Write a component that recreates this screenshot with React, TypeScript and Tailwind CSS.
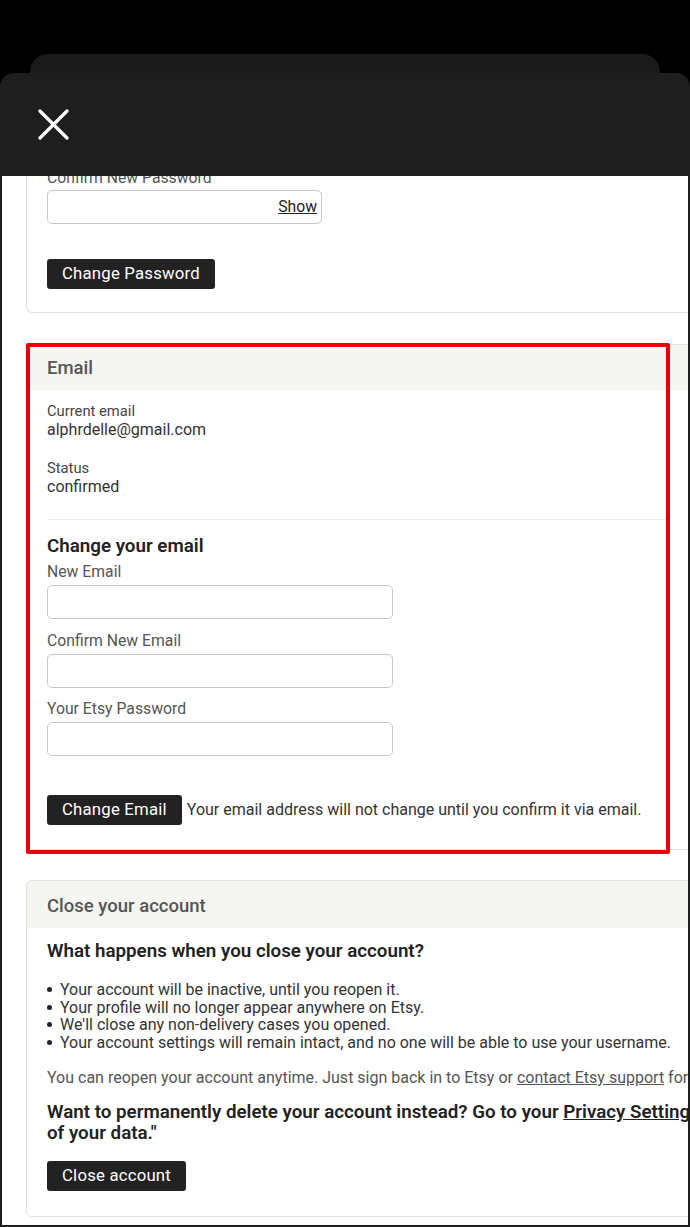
import React from "react";

const font = { fontFamily: "Roboto, 'Liberation Sans', sans-serif" };

function Input({ w = "w-[346px]", show = false }: { w?: string; show?: boolean }) {
  return (
    <div className={`${w} h-[34px] rounded-[5px] border border-[#c8c8c8] bg-white flex items-center justify-end pr-[4px]`}>
      {show && <span className="text-[15.75px] text-[#222] underline">Show</span>}
    </div>
  );
}

function Btn({ children }: { children: React.ReactNode }) {
  return (
    <div className="inline-flex h-[30px] items-center rounded-[3px] bg-[#222222] px-[15px] text-[16.75px] text-white tracking-[0.2px] shrink-0">
      {children}
    </div>
  );
}

export default function App() {
  return (
    <div className="w-[690px] h-[1227px] bg-black overflow-hidden flex flex-col text-[#222]" style={font}>
      <div className="h-[54px] shrink-0" />
      <div className="mx-[30px] h-[19px] shrink-0 rounded-t-[18px] bg-[#1a1a1a]" />
      <div className="flex-1 flex flex-col rounded-t-[14px] bg-[#1e1e1e] px-[2px] pb-[2px] min-h-0">
        <div className="h-[103px] shrink-0 flex items-center pl-[36px]">
          <svg width="31" height="31" viewBox="0 0 31 31">
            <path d="M2 2 L29 29 M29 2 L2 29" stroke="white" strokeWidth="3.2" strokeLinecap="round" />
          </svg>
        </div>
        <div className="flex-1 bg-white overflow-hidden min-h-0">
          <div className="-mt-[7px] ml-[24px] w-[700px]">
            {/* Password card (scrolled) */}
            <div className="rounded-b-[6px] border border-t-0 border-[#e1e1e1] px-[20px] pb-[23px]">
              <div className="h-[21px] text-[15.75px] leading-[17px] text-[#555]">Confirm New Password</div>
              <div>
                <Input w="w-[275px]" show />
              </div>
              <div className="mt-[35px]">
                <Btn>Change Password</Btn>
              </div>
            </div>

            {/* Email card */}
            <div className="relative mt-[31px] rounded-[6px] border border-[#e1e1e1]">
              <div className="h-[45px] bg-[#f5f5f1] rounded-t-[6px] flex items-center px-[20px] pt-[3px] text-[18.5px] font-medium text-[#555]">
                Email
              </div>
              <div className="px-[20px] pt-[12px] pb-[24px]">
                <div className="text-[14.75px] leading-[18px] text-[#444]">Current email</div>
                <div className="text-[16px] leading-[20px] text-[#333]">alphrdelle@gmail.com</div>
                <div className="mt-[19px] text-[14.75px] leading-[18px] text-[#444]">Status</div>
                <div className="text-[16px] leading-[20px] text-[#333]">confirmed</div>
                <div className="mt-[22px] w-[620px] border-t border-[#ececec]" />
                <div className="mt-[15px] text-[18.75px] leading-[22px] font-semibold text-[#222]">Change your email</div>
                <div className="mt-[5px] text-[15.75px] leading-[20px] text-[#555]">New Email</div>
                <div className="mt-[3px]"><Input /></div>
                <div className="mt-[12px] text-[15.75px] leading-[20px] text-[#555]">Confirm New Email</div>
                <div className="mt-[3px]"><Input /></div>
                <div className="mt-[11px] text-[15.75px] leading-[20px] text-[#555]">Your Etsy Password</div>
                <div className="mt-[3px]"><Input /></div>
                <div className="mt-[39px] flex items-center gap-[5px]">
                  <Btn>Change Email</Btn>
                  <span className="text-[16px] text-[#333] whitespace-nowrap">Your email address will not change until you confirm it via email.</span>
                </div>
              </div>
              <div className="absolute left-[-1px] top-[-2px] w-[644px] h-[511px] border-[4px] border-[#e8000b] rounded-[2px] pointer-events-none" />
            </div>

            {/* Close account card */}
            <div className="mt-[30px] rounded-[6px] border border-[#e1e1e1]">
              <div className="h-[47px] bg-[#f5f5f1] rounded-t-[6px] flex items-center px-[20px] pt-[4px] text-[18.5px] font-medium text-[#555]">
                Close your account
              </div>
              <div className="px-[20px] pt-[12px] pb-[25px]">
                <div className="text-[18.75px] leading-[22px] font-semibold text-[#222]">What happens when you close your account?</div>
                <ul className="mt-[19px] text-[16px] leading-[17.5px] text-[#333]">
                  {[
                    "Your account will be inactive, until you reopen it.",
                    "Your profile will no longer appear anywhere on Etsy.",
                    "We'll close any non-delivery cases you opened.",
                    "Your account settings will remain intact, and no one will be able to use your username.",
                  ].map((t) => (
                    <li key={t} className="flex items-center gap-[8px] whitespace-nowrap">
                      <span className="w-[5px] h-[5px] rounded-full bg-[#222] shrink-0" />
                      <span>{t}</span>
                    </li>
                  ))}
                </ul>
                <div className="mt-[17px] text-[16px] leading-[20px] text-[#555] whitespace-nowrap">
                  You can reopen your account anytime. Just sign back in to Etsy or{" "}
                  <span className="underline">contact Etsy support</span> for help.
                </div>
                <div className="mt-[14px] text-[18.75px] leading-[21px] font-semibold text-[#222] whitespace-nowrap">
                  Want to permanently delete your account instead? Go to your{" "}
                  <span className="underline">Privacy Settings</span> to request deletion
                  <br />
                  of your data."
                </div>
                <div className="mt-[17px]">
                  <Btn>Close account</Btn>
                </div>
              </div>
            </div>
          </div>
        </div>
      </div>
    </div>
  );
}
